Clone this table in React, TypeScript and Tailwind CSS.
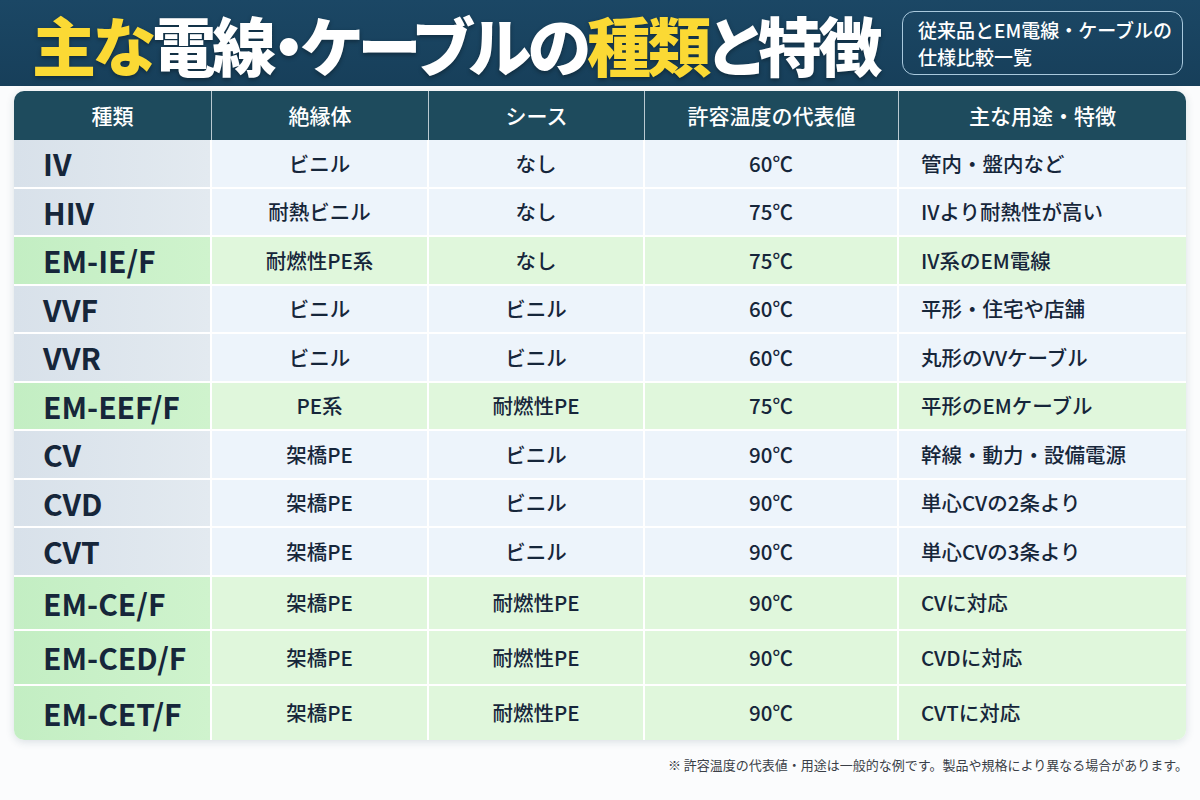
import React from "react";

type Row = { k: string; a: string; b: string; t: string; u: string; g: boolean };

const rows: Row[] = [
  { k: "IV", a: "ビニル", b: "なし", t: "60℃", u: "管内・盤内など", g: false },
  { k: "HIV", a: "耐熱ビニル", b: "なし", t: "75℃", u: "IVより耐熱性が高い", g: false },
  { k: "EM-IE/F", a: "耐燃性PE系", b: "なし", t: "75℃", u: "IV系のEM電線", g: true },
  { k: "VVF", a: "ビニル", b: "ビニル", t: "60℃", u: "平形・住宅や店舗", g: false },
  { k: "VVR", a: "ビニル", b: "ビニル", t: "60℃", u: "丸形のVVケーブル", g: false },
  { k: "EM-EEF/F", a: "PE系", b: "耐燃性PE", t: "75℃", u: "平形のEMケーブル", g: true },
  { k: "CV", a: "架橋PE", b: "ビニル", t: "90℃", u: "幹線・動力・設備電源", g: false },
  { k: "CVD", a: "架橋PE", b: "ビニル", t: "90℃", u: "単心CVの2条より", g: false },
  { k: "CVT", a: "架橋PE", b: "ビニル", t: "90℃", u: "単心CVの3条より", g: false },
  { k: "EM-CE/F", a: "架橋PE", b: "耐燃性PE", t: "90℃", u: "CVに対応", g: true },
  { k: "EM-CED/F", a: "架橋PE", b: "耐燃性PE", t: "90℃", u: "CVDに対応", g: true },
  { k: "EM-CET/F", a: "架橋PE", b: "耐燃性PE", t: "90℃", u: "CVTに対応", g: true },
];

const cols = "grid grid-cols-[198px_217px_216px_254px_1fr]";

export default function App() {
  return (
    <div
      className="w-[1200px] h-[800px] bg-[#fbfcfd] overflow-hidden"
      style={{ fontFamily: '"Noto Sans CJK JP", "Noto Sans", sans-serif' }}
    >
      {/* Header band */}
      <div className="h-[86px] bg-gradient-to-b from-[#1b4765] to-[#173f5a] flex items-center pl-[32px] pr-[17px]">
        <h1 className="shrink-0 pr-[8px] text-[64px] leading-[80px] font-black tracking-[-3.5px] [font-feature-settings:'palt'] text-white [text-shadow:0_2px_4px_rgba(0,0,0,0.35)] whitespace-nowrap">
          <span className="text-[#fbd934] pr-[4px] -mr-[4px]">主な</span>
          <span className="pr-[4px] -mr-[4px]">電線・ケーブルの</span>
          <span className="text-[#fbd934] pr-[4px] -mr-[4px]">種類</span>
          <span className="pr-[4px] -mr-[4px]">と特徴</span>
        </h1>
        <div className="ml-auto shrink-0 w-[281px] h-[64px] rounded-[12px] border-[1.5px] border-[#a9c9dd] flex flex-col justify-center pl-[15px] text-white text-[19px] leading-[27px] font-medium whitespace-nowrap">
          <div>従来品とEM電線・ケーブルの</div>
          <div>仕様比較一覧</div>
        </div>
      </div>

      {/* Table */}
      <div className="mx-[14px] mt-[5px] rounded-[10px] overflow-hidden shadow-[0_2px_8px_rgba(30,60,80,0.15)] bg-white">
        <div className={`${cols} h-[49px] bg-[#1e4b5d] text-white text-[21px] font-medium`}>
          {["種類", "絶縁体", "シース", "許容温度の代表値", "主な用途・特徴"].map((h, i) => (
            <div
              key={h}
              className={`flex items-center justify-center ${i < 4 ? "border-r-[1.5px] border-[#b9c9d1]" : ""}`}
            >
              {h}
            </div>
          ))}
        </div>
        {rows.map((r, idx) => {
          const last = idx === rows.length - 1;
          const h = r.g && idx >= 9 ? "h-[54.5px]" : "h-[48.5px]";
          const first = r.g
            ? "bg-gradient-to-r from-[#c3eec3] to-[#cff3cd]"
            : "bg-gradient-to-r from-[#d8e1ea] to-[#e3eaf0]";
          const other = r.g ? "bg-[#e0f7dc]" : "bg-[#edf4fb]";
          const bb = last ? "" : "border-b-2 border-white";
          return (
            <div key={r.k} className={`${cols} ${h} ${bb} text-[#16263a]`}>
              <div className={`${first} border-r-2 border-white flex items-center pl-[29px] text-[30px] font-bold leading-none`}>
                {r.k}
              </div>
              <div className={`${other} border-r-2 border-white flex items-center justify-center text-[20.5px] font-medium`}>
                {r.a}
              </div>
              <div className={`${other} border-r-2 border-white flex items-center justify-center text-[20.5px] font-medium`}>
                {r.b}
              </div>
              <div className={`${other} border-r-2 border-white flex items-center justify-center text-[20.5px] font-medium`}>
                {r.t}
              </div>
              <div className={`${other} flex items-center pl-[22px] text-[20.5px] font-medium`}>{r.u}</div>
            </div>
          );
        })}
      </div>

      <div className="mt-[16px] pr-[12px] text-right text-[13px] text-[#3a3f47] leading-[18px]">
        ※ 許容温度の代表値・用途は一般的な例です。製品や規格により異なる場合があります。
      </div>
    </div>
  );
}
